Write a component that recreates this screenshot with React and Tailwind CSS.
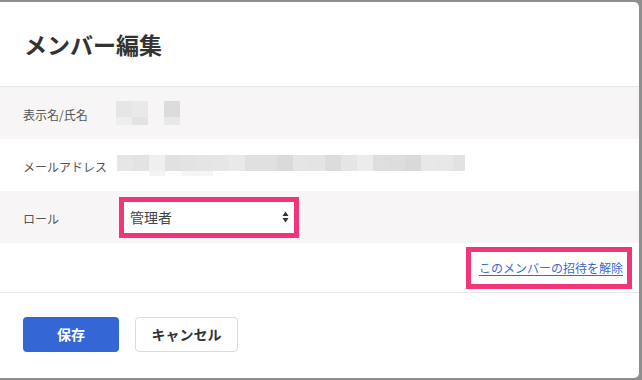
const NAME_TOP = ["bg-[#e6e6e6]", "bg-[#e9e9e9]", "bg-transparent", "bg-[#dcdcdc]"];
const NAME_BOTTOM = ["bg-[#eeeeee]", "bg-[#e3e3e3]", "bg-transparent", "bg-[#e8e8e8]"];
const MAIL = [
  "bg-[#e6e6e6]", "bg-[#e3e3e3]", "bg-[#efefef]", "bg-[#e1e1e1]", "bg-[#e3e3e3]",
  "bg-[#e5e5e5]", "bg-[#e6e6e6]", "bg-[#e9e9e9]", "bg-[#e0e0e0]", "bg-[#e0e0e0]",
  "bg-[#dadada]", "bg-[#e5e5e5]", "bg-[#e4e4e4]", "bg-[#dcdcdc]", "bg-[#e5e5e5]",
  "bg-[#ececec]", "bg-[#dedede]", "bg-[#dddddd]", "bg-[#d9d9d9]", "bg-[#e8e8e8]",
  "bg-[#e7e7e7]", "bg-[#e2e2e2]",
];

function Row({ label, children, gray }) {
  return (
    <div className={`flex h-[52px] items-center pl-[23px] ${gray ? "bg-[#f7f5f6]" : "bg-white"}`}>
      <div className="w-[96px] pt-[4px] text-[12px] text-[#555]">{label}</div>
      {children}
    </div>
  );
}

export default function App() {
  return (
    <div
      className="h-[380px] w-[642px] overflow-hidden bg-[#8f8f8f] pt-[2px]"
      style={{ fontFamily: '"Noto Sans CJK JP", "Noto Sans", sans-serif' }}
    >
      <div className="flex h-[376px] w-[639px] flex-col overflow-hidden rounded-r-[5px] bg-white">
        {/* Header */}
        <div className="flex h-[85px] items-center border-b border-[#e8e8e8] pl-[24px]">
          <h1 className="text-[23px] font-bold text-[#333]">メンバー編集</h1>
        </div>

        {/* Form rows */}
        <Row label="表示名/氏名" gray>
          <div className="-ml-[3px] flex flex-col">
            <div className="flex">
              {NAME_TOP.map((c, i) => (
                <div key={i} className={`h-[16px] w-[16px] ${c}`} />
              ))}
            </div>
            <div className="flex">
              {NAME_BOTTOM.map((c, i) => (
                <div key={i} className={`h-[8px] w-[16px] ${c}`} />
              ))}
            </div>
          </div>
        </Row>
        <Row label="メールアドレス">
          <div className="-ml-[2px] flex flex-col">
            <div className="flex w-[348px] overflow-hidden">
              {MAIL.map((c, i) => (
                <div key={i} className={`h-[16px] w-[16px] shrink-0 ${c}`} />
              ))}
            </div>
            <div className="flex h-[5px]">
              <div className="w-[32px]" />
              <div className="h-[5px] w-[16px] bg-[#f3f3f3]" />
              <div className="w-[16px]" />
              <div className="h-[5px] w-[32px] bg-[#f5f5f5]" />
            </div>
          </div>
        </Row>
        <Row label="ロール" gray>
          <div className="flex h-[41px] w-[180px] items-center justify-between border-[5px] border-[#f2357a] bg-white pl-[6px] pr-[5px]">
            <span className="text-[14px] text-[#444]">管理者</span>
            <svg width="7" height="12" viewBox="0 0 7 12">
              <path d="M3.5 0.5 L6.5 5 L0.5 5 Z" fill="#333" />
              <path d="M3.5 11.5 L6.5 7 L0.5 7 Z" fill="#333" />
            </svg>
          </div>
        </Row>

        {/* Cancel invite */}
        <div className="flex h-[50px] items-center justify-end border-b border-[#e8e8e8] pr-[7px]">
          <div className="flex h-[42px] items-center border-[5px] border-[#f2357a] pl-[8px] pr-[4px]">
            <a href="#" className="text-[12px] text-[#3a68d8] underline underline-offset-[2px]">
              このメンバーの招待を解除
            </a>
          </div>
        </div>

        {/* Footer */}
        <div className="flex gap-[16px] pl-[23px] pt-[24px]">
          <button className="h-[35px] w-[96px] rounded-[4px] bg-[#3566d6] text-[14px] font-bold text-white">
            保存
          </button>
          <button className="h-[35px] w-[103px] rounded-[4px] border border-[#dcdcdc] bg-white text-[14px] font-bold text-[#333]">
            キャンセル
          </button>
        </div>
      </div>
    </div>
  );
}
